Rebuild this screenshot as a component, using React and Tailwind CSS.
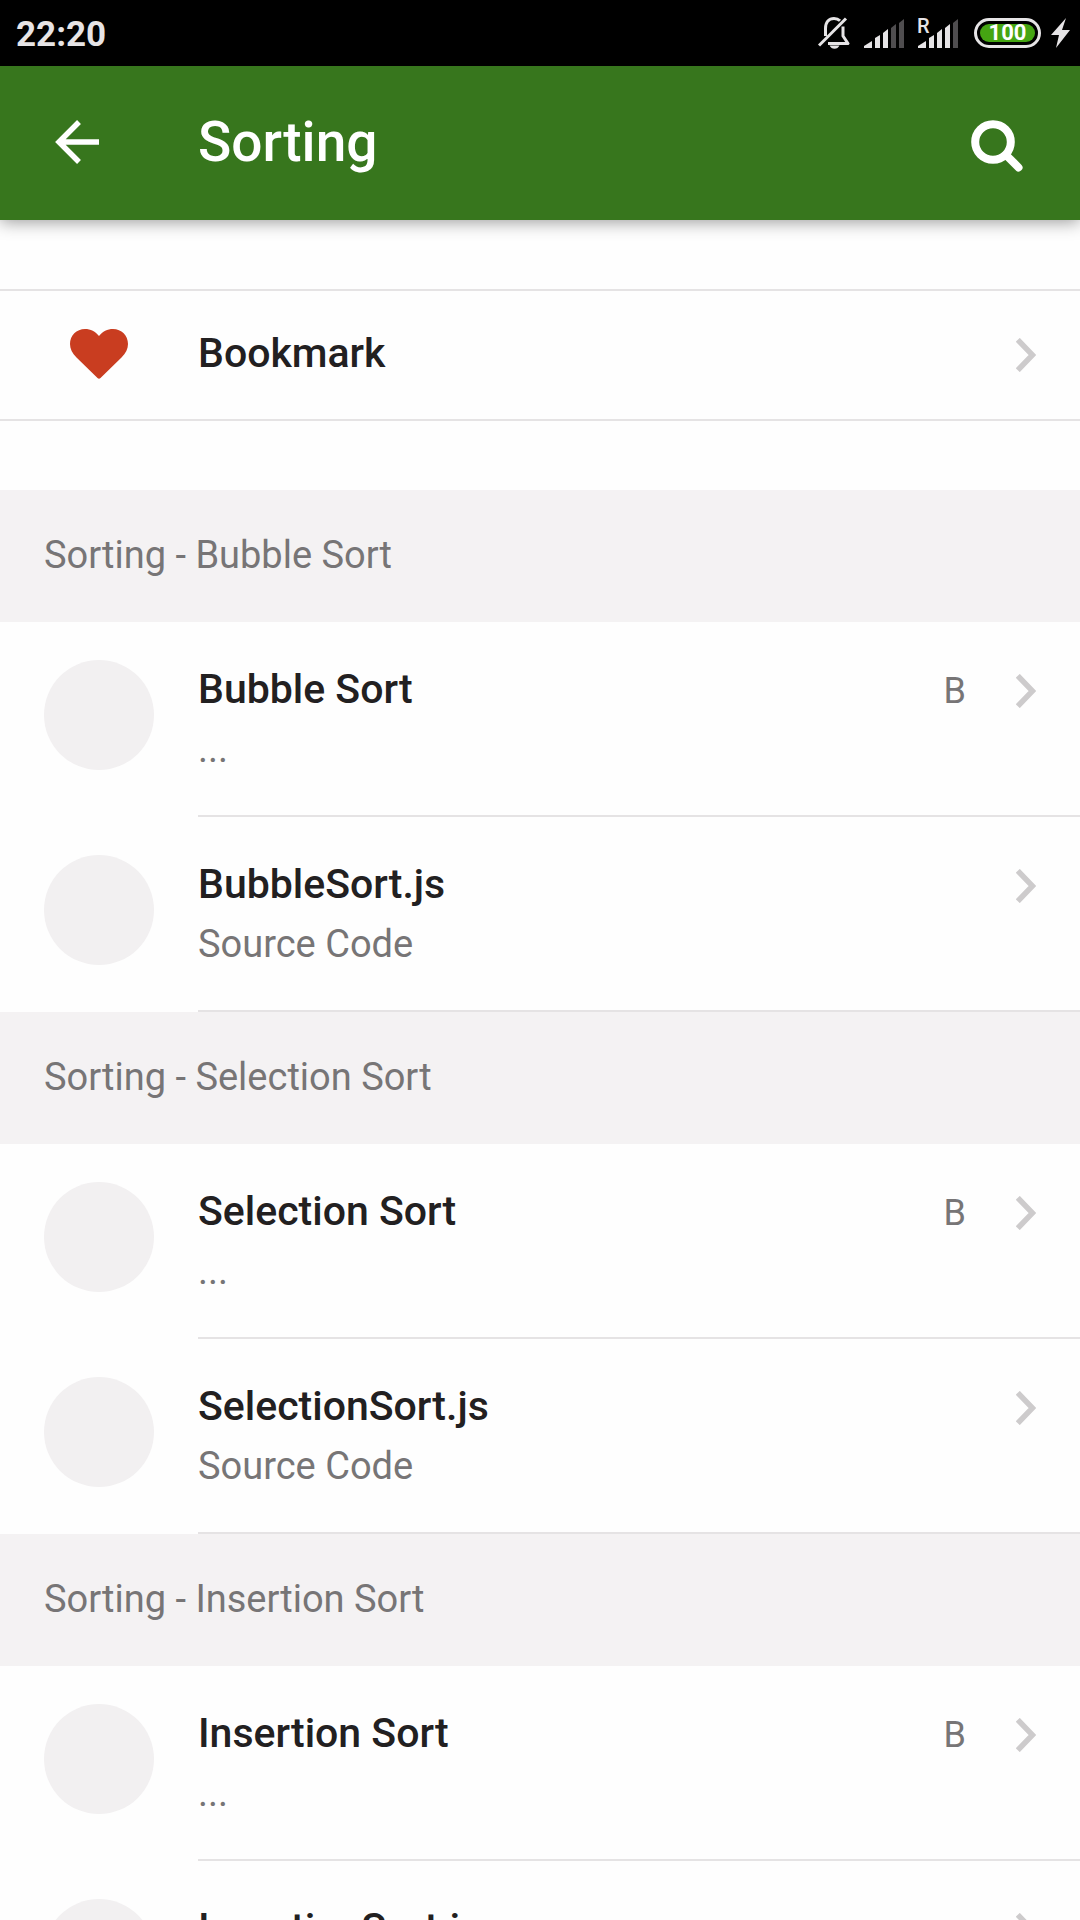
const sections = [
  {
    title: 'Sorting - Bubble Sort',
    items: [
      { title: 'Bubble Sort', subtitle: '...', grade: 'B' },
      { title: 'BubbleSort.js', subtitle: 'Source Code' },
    ],
  },
  {
    title: 'Sorting - Selection Sort',
    items: [
      { title: 'Selection Sort', subtitle: '...', grade: 'B' },
      { title: 'SelectionSort.js', subtitle: 'Source Code' },
    ],
  },
  {
    title: 'Sorting - Insertion Sort',
    items: [
      { title: 'Insertion Sort', subtitle: '...', grade: 'B' },
      { title: 'InsertionSort.js', subtitle: 'Source Code' },
    ],
  },
]

const bars = [
  'M0 29v-2l8-5v7z',
  'M11 29v-10l5-3v13z',
  'M19 29v-15l5-4v19z',
  'M27 29v-20l5-4v24z',
  'M35 29v-25l5-4v29z',
]

const Signal = ({ level }) => (
  <svg className="h-[29px] w-[40px]" viewBox="0 0 40 29" aria-hidden="true">
    {bars.map((d, i) => (
      <path key={d} d={d} fill={i < level ? '#e6e4e6' : '#4f4d4f'} />
    ))}
  </svg>
)

const StatusBar = () => (
  <div className="flex h-[66px] shrink-0 items-center justify-between bg-black pl-4 pr-[10px] text-[#e6e4e6]">
    <span className="pt-[3px] text-[35px] leading-[40px] font-bold">22:20</span>
    <div className="flex items-center">
      <svg className="mr-[14px] h-8 w-8" viewBox="0 0 32 32" fill="none" stroke="#e6e4e6" strokeWidth="3" aria-hidden="true">
        <path d="M7.5 19v-7.500C7.500 5 11 1.500 16 1.500c2.500 0 4.500.8 6 2.300" />
        <path d="M25 9.500v9.500l5 7.500H10" strokeLinejoin="round" />
        <path d="M1 28.500L28 1.500" />
        <path d="M11.500 28.500h10c-1 2-2.800 3.300-5 3.300s-4-1.300-5-3.300z" fill="#e6e4e6" stroke="none" />
      </svg>
      <Signal level={3} />
      <div className="relative ml-[14px] flex">
        <Signal level={4} />
        <span className="absolute -left-px top-0 bg-black text-[20px] leading-[14px] font-medium">R</span>
      </div>
      <div className="ml-4 flex h-[30px] w-[67px] rounded-full border-3 border-[#e6e4e6] p-[3px]">
        <span className="flex flex-1 items-center justify-center rounded-full bg-[#45a512] text-[22px] leading-none font-bold text-white">
          100
        </span>
      </div>
      <svg className="ml-[10px] h-[30px] w-[19px]" viewBox="0 0 19 30" fill="#e6e4e6" aria-hidden="true">
        <path d="M15 0L0 17h8L5 30l14-18h-8z" />
      </svg>
    </div>
  </div>
)

const Header = () => (
  <header className="relative z-10 flex h-[154px] shrink-0 items-center bg-[#37761d] pl-[55px] pr-[57px] pb-[2px] text-white shadow-[0_2px_16px_rgba(0,0,0,0.4)]">
    <button type="button" aria-label="Back" className="mr-[99px]">
      <svg className="h-11 w-11" viewBox="0 0 44 44" fill="none" stroke="currentColor" strokeWidth="5.500">
        <path d="M24 2L4 22l20 20M4 22h40" />
      </svg>
    </button>
    <h1 className="flex-1 text-[55px] leading-[64px] font-medium">Sorting</h1>
    <button type="button" aria-label="Search" className="pt-2">
      <svg className="h-[52px] w-[52px]" viewBox="0 0 52 52" fill="none" stroke="currentColor">
        <circle cx="22" cy="22" r="17.800" strokeWidth="8" />
        <path d="M35 35l12.500 12.500" strokeWidth="8" strokeLinecap="round" />
      </svg>
    </button>
  </header>
)

const Chevron = () => (
  <svg className="h-[34px] w-5" viewBox="0 0 20 34" fill="none" stroke="#cdcbcc" strokeWidth="5.500" aria-hidden="true">
    <path d="M1.800 1.800L16.500 17 1.800 32.200" />
  </svg>
)

const Row = ({ item }) => (
  <li>
    <a href="#" className="flex pl-11">
      <span className="mt-[38px] mr-11 h-[110px] w-[110px] shrink-0 rounded-full bg-[#f2f0f1]" />
      <span className="flex min-w-0 flex-1 border-b-2 border-[#e5e3e4] pt-[38px] pr-11 pb-[35px]">
        <span className="flex min-w-0 flex-1 flex-col">
          <span className="text-[41px] leading-[58px] font-medium text-[#222021]">{item.title}</span>
          <span className="text-[38px] leading-[62px] text-[#777576]">{item.subtitle}</span>
        </span>
        <span className="flex h-[62px] items-center gap-[50px] text-[36px] text-[#777576]">
          {item.grade && <span>{item.grade}</span>}
          <Chevron />
        </span>
      </span>
    </a>
  </li>
)

const App = () => {
  return (
    <div className="flex h-screen flex-col overflow-hidden bg-[#fefefe] font-['Roboto',sans-serif]">
      <StatusBar />
      <Header />
      <main className="min-h-0 flex-1 overflow-y-auto [scrollbar-width:none]">
        <a href="#" className="my-[69px] flex border-y-2 border-[#e5e3e4] pt-8 pr-11 pb-8 pl-[70px]">
          <span className="mr-[70px] flex h-[62px] items-center">
            <svg className="h-[50px] w-[58px]" viewBox="0 0 58 50" fill="#c93d20" aria-hidden="true">
              <path d="M29 7C25.500 2.500 20.500 0 15 0 6.500 0 0 6.500 0 15c0 5 2.200 9.200 6.500 13.500L27.500 49q1.500 1.500 3 0l21-20.500C55.800 24.200 58 20 58 15 58 6.500 51.500 0 43 0 37.500 0 32.500 2.500 29 7z" />
            </svg>
          </span>
          <span className="flex-1 text-[41px] leading-[60px] font-medium text-[#222021]">Bookmark</span>
          <span className="flex h-16 items-center">
            <Chevron />
          </span>
        </a>
        {sections.map((section) => (
          <section key={section.title}>
            <h2 className="bg-[#f4f2f3] px-11 pt-[35px] pb-[37px] text-[38px] leading-[60px] text-[#777576]">{section.title}</h2>
            <ul>
              {section.items.map((item) => (
                <Row key={item.title} item={item} />
              ))}
            </ul>
          </section>
        ))}
      </main>
    </div>
  )
}

export default App
